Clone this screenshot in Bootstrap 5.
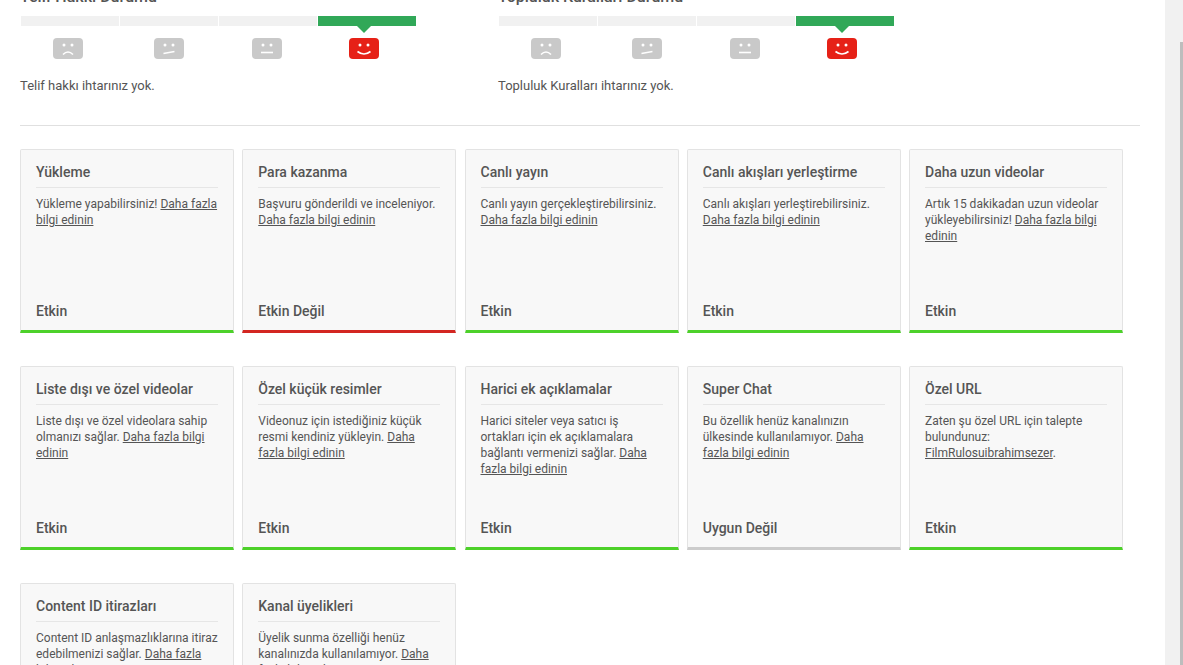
<!DOCTYPE html>
<html lang="tr">

<head>
    <meta charset="UTF-8">
    <meta name="viewport" content="width=device-width, initial-scale=1.0">
    <title>Kanal Durumu</title>
    <link href="https://cdn.jsdelivr.net/npm/bootstrap@5.3.3/dist/css/bootstrap.min.css" rel="stylesheet">
    <style>
        html, body { height: 665px; overflow: hidden; }
        body { font-family: Roboto, "Liberation Sans", sans-serif; color: #555; background: #fff; }
        .page-main { width: 1165px; height: 678px; margin-top: -13px; padding-left: 20px; flex: none; }
        .scroll-rail { width: 18px; height: 665px; background: #f1f1f1; flex: none; }
        .scroll-thumb { width: 3px; height: 623px; margin-top: 42px; margin-left: 15px; background: #bdbdbd; }

        .status-row { column-gap: 81px; }
        .status-block { width: 397px; flex: none; }
        .status-title { font-size: 16px; line-height: 20px; font-weight: 500; margin-bottom: 9px; color: #555; }
        .strike-bars { display: grid; grid-template-columns: repeat(4, 98px); column-gap: 1px; padding-left: 1px; }
        .strike-seg { height: 10px; background: #f1f1f1; position: relative; }
        .strike-seg.is-on { background: #31a858; }
        .strike-seg.is-on::after {
            content: ""; position: absolute; top: 10px; left: 39px;
            border-left: 7px solid transparent; border-right: 7px solid transparent; border-top: 7px solid #31a858;
        }
        .strike-icons { display: grid; grid-template-columns: repeat(4, 98px); column-gap: 1px; padding-left: 1px; margin-top: 12px; }
        .strike-icons svg { display: block; width: 30px; height: 21px; }
        .icon-a { margin-left: 32px; }
        .icon-b { margin-left: 34px; }
        .icon-c { margin-left: 33px; }
        .icon-d { margin-left: 31px; }
        .status-note { font-size: 13px; line-height: 16px; margin: 19px 0 31px; }
        .page-rule { width: 1120px; margin: 0 0 23px; border-top: 1px solid #e0e0e0; opacity: 1; }

        .feature-wrap { display: flex; flex-wrap: wrap; column-gap: 8.250px; row-gap: 33px; width: 1110px; }
        .feature-card {
            width: 214px; height: 184px; background: #f8f8f8; color: #555;
            border: 1px solid #e3e3e3; border-bottom-width: 3px; border-radius: 2px 2px 0 0;
        }
        .feature-card .card-body { display: flex; flex-direction: column; padding: 12px 15px 0; }
        .feature-card .card-title {
            font-size: 14px; line-height: 20px; font-weight: 500; margin: 0 0 8px;
            padding-bottom: 5px; border-bottom: 1px solid #e6e6e6;
        }
        .feature-card .card-text { font-size: 12px; line-height: 16px; margin: 0; }
        .feature-card a { color: #555; }
        .feature-state { font-size: 14px; line-height: 20px; font-weight: 500; margin-top: auto; padding-bottom: 9px; }
        .state-on { border-bottom-color: #4dd12a; }
        .state-off { border-bottom-color: #d32621; }
        .state-na { border-bottom-color: #cccccc; }
    </style>
    <script src="https://cdn.jsdelivr.net/npm/bootstrap@5.3.3/dist/js/bootstrap.bundle.min.js"></script>
</head>

<body>
    <div class="d-flex">
        <main class="page-main">
            <div class="d-flex status-row">
                <section class="status-block" id="telif"></section>
                <section class="status-block" id="kurallar"></section>
            </div>
            <hr class="page-rule">
            <div class="feature-wrap" id="features"></div>
        </main>
        <div class="scroll-rail">
            <div class="scroll-thumb"></div>
        </div>
    </div>

    <script>
        // yuz ikonlari: agiz cizgisi disinda hepsi ayni
        const mouths = [
            "M10 16.5 Q15 11.5 20 16.5",
            "M9.500 15.500 L20.500 13.500",
            "M9 14.500 H21",
            "M8.500 13.500 Q15 18.500 21.500 13.500"
        ];
        const iconClass = ["icon-a", "icon-b", "icon-c", "icon-d"];

        function faceIcon(i) {
            let fill = i === 3 ? "#e62117" : "#c9c9c9";
            return `<svg class="${iconClass[i]}" viewBox="0 0 30 21">
                <rect width="30" height="21" rx="4" fill="${fill}"/>
                <circle cx="11" cy="7" r="1.500" fill="#fff"/>
                <circle cx="19" cy="7" r="1.500" fill="#fff"/>
                <path d="${mouths[i]}" fill="none" stroke="#fff" stroke-width="1.600"/>
            </svg>`;
        }

        function statusBlock(title, note) {
            let bars = [0, 1, 2, 3].map(i => `<div class="strike-seg${i === 3 ? " is-on" : ""}"></div>`).join("");
            let icons = [0, 1, 2, 3].map(i => `<div>${faceIcon(i)}</div>`).join("");
            return `<h2 class="status-title">${title}</h2>
                <div class="strike-bars">${bars}</div>
                <div class="strike-icons">${icons}</div>
                <p class="status-note">${note}</p>`;
        }

        document.getElementById("telif").innerHTML = statusBlock("Telif Hakkı Durumu", "Telif hakkı ihtarınız yok.");
        document.getElementById("kurallar").innerHTML = statusBlock("Topluluk Kuralları Durumu", "Topluluk Kuralları ihtarınız yok.");

        const more = '<a href="#">Daha fazla bilgi edinin</a>';
        const features = [
            ["Yükleme", "Yükleme yapabilirsiniz! " + more, "Etkin", "state-on"],
            ["Para kazanma", "Başvuru gönderildi ve inceleniyor. " + more, "Etkin Değil", "state-off"],
            ["Canlı yayın", "Canlı yayın gerçekleştirebilirsiniz. " + more, "Etkin", "state-on"],
            ["Canlı akışları yerleştirme", "Canlı akışları yerleştirebilirsiniz. " + more, "Etkin", "state-on"],
            ["Daha uzun videolar", "Artık 15 dakikadan uzun videolar yükleyebilirsiniz! " + more, "Etkin", "state-on"],
            ["Liste dışı ve özel videolar", "Liste dışı ve özel videolara sahip olmanızı sağlar. " + more, "Etkin", "state-on"],
            ["Özel küçük resimler", "Videonuz için istediğiniz küçük resmi kendiniz yükleyin. " + more, "Etkin", "state-on"],
            ["Harici ek açıklamalar", "Harici siteler veya satıcı iş ortakları için ek açıklamalara bağlantı vermenizi sağlar. " + more, "Etkin", "state-on"],
            ["Super Chat", "Bu özellik henüz kanalınızın ülkesinde kullanılamıyor. " + more, "Uygun Değil", "state-na"],
            ["Özel URL", 'Zaten şu özel URL için talepte bulundunuz: <a href="#">FilmRulosuibrahimsezer</a>.', "Etkin", "state-on"],
            ["Content ID itirazları", "Content ID anlaşmazlıklarına itiraz edebilmenizi sağlar. " + more, "Etkin", "state-on"],
            ["Kanal üyelikleri", "Üyelik sunma özelliği henüz kanalınızda kullanılamıyor. " + more, "Uygun Değil", "state-na"]
        ];

        document.getElementById("features").innerHTML = features.map(f => `
            <div class="card feature-card ${f[3]}">
                <div class="card-body">
                    <h3 class="card-title">${f[0]}</h3>
                    <p class="card-text">${f[1]}</p>
                    <div class="feature-state">${f[2]}</div>
                </div>
            </div>`).join("");
    </script>
</body>

</html>
